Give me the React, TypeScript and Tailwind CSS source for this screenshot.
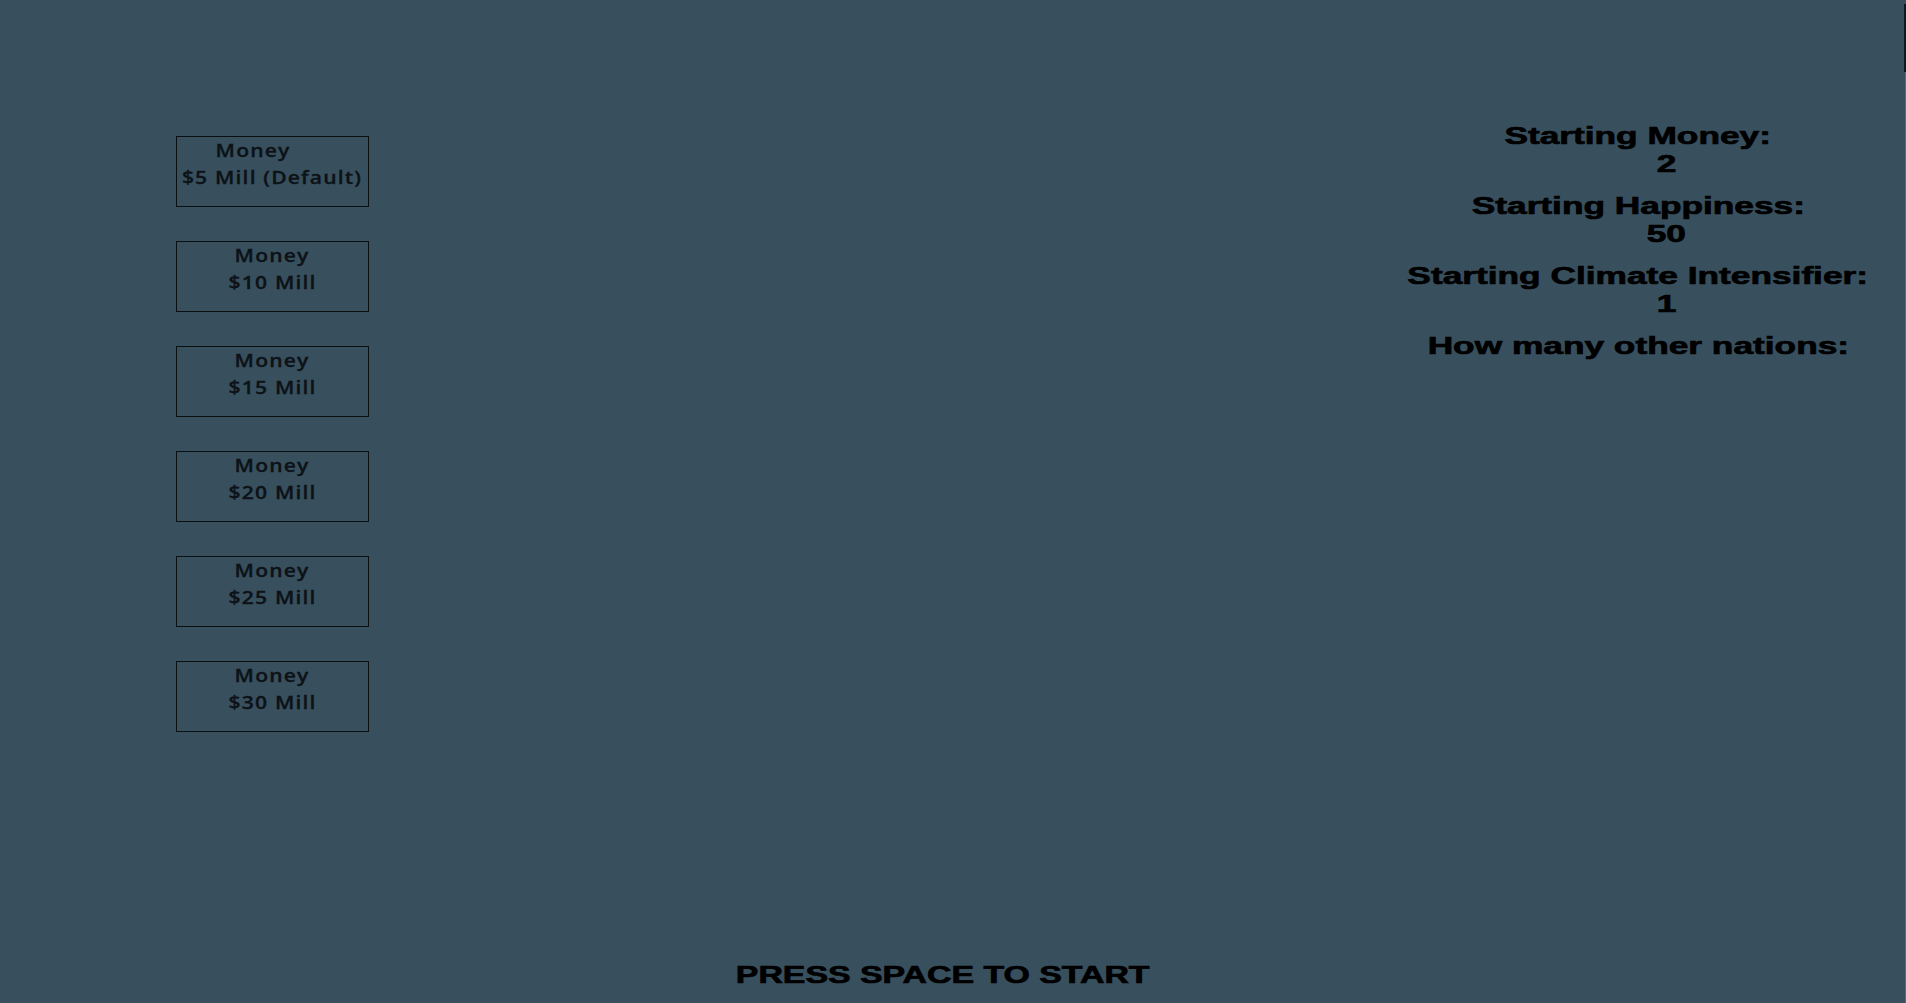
const moneyOptions = [
  { label: "$5 Mill (Default)", offset: true },
  { label: "$10 Mill", offset: false },
  { label: "$15 Mill", offset: false },
  { label: "$20 Mill", offset: false },
  { label: "$25 Mill", offset: false },
  { label: "$30 Mill", offset: false },
];

const stats = [
  { label: "Starting Money:", value: "2" },
  { label: "Starting Happiness:", value: "50" },
  { label: "Starting Climate Intensifier:", value: "1" },
  { label: "How many other nations:", value: "" },
];

const App = () => {
  return (
    <div className="relative h-screen w-full overflow-hidden bg-[#384f5e] flex flex-col">
      {/* scrollbar sliver on the right edge */}
      <div className="absolute right-0 top-[4px] w-[2px] h-[68px] bg-[#0e1a21]" />
      <div className="absolute right-0 top-[72px] bottom-0 w-[1px] bg-[#5c6c77]" />

      <div className="flex">
        {/* Money choices */}
        <div className="pl-[176px] pt-[136px] flex flex-col gap-[34px]">
          {moneyOptions.map((opt) => (
            <div
              key={opt.label}
              className="w-[193px] h-[71px] border border-[#0a0f12] flex flex-col items-center text-[18px] leading-[27px] font-semibold tracking-[1px] text-[#0c1216] whitespace-nowrap [-webkit-text-stroke:0.3px_#0c1216]"
              style={{ fontFamily: '"Open Sans", "Noto Sans", sans-serif' }}
            >
              <span className={`inline-block scale-x-[1.17] ${opt.offset ? "-translate-x-[19px]" : ""}`}>Money</span>
              <span className="inline-block scale-x-[1.17]">{opt.label}</span>
            </div>
          ))}
        </div>

        {/* Starting stats */}
        <div
          className="ml-auto mr-[8px] w-[520px] pt-[121px] flex flex-col gap-[12px] text-black font-bold text-[24px] leading-[29px] [-webkit-text-stroke:0.7px_black]"
          style={{ fontFamily: '"Liberation Sans", Arial, sans-serif' }}
        >
          {stats.map((s) => (
            <div key={s.label} className="flex flex-col items-center">
              <span className="inline-block scale-x-[1.47] whitespace-nowrap">{s.label}</span>
              {s.value && (
                <div className="w-full pl-[57px] flex justify-center">
                  <span className="inline-block scale-x-[1.47] -translate-y-[1.5px]">{s.value}</span>
                </div>
              )}
            </div>
          ))}
        </div>
      </div>

      <div
        className="mt-auto pb-[16px] pr-[21px] flex justify-center text-black font-bold text-[24px] leading-[24px] [-webkit-text-stroke:0.7px_black]"
        style={{ fontFamily: '"Liberation Sans", Arial, sans-serif' }}
      >
        <span className="inline-block scale-x-[1.41] whitespace-nowrap">PRESS SPACE TO START</span>
      </div>
    </div>
  );
};

export default App;
